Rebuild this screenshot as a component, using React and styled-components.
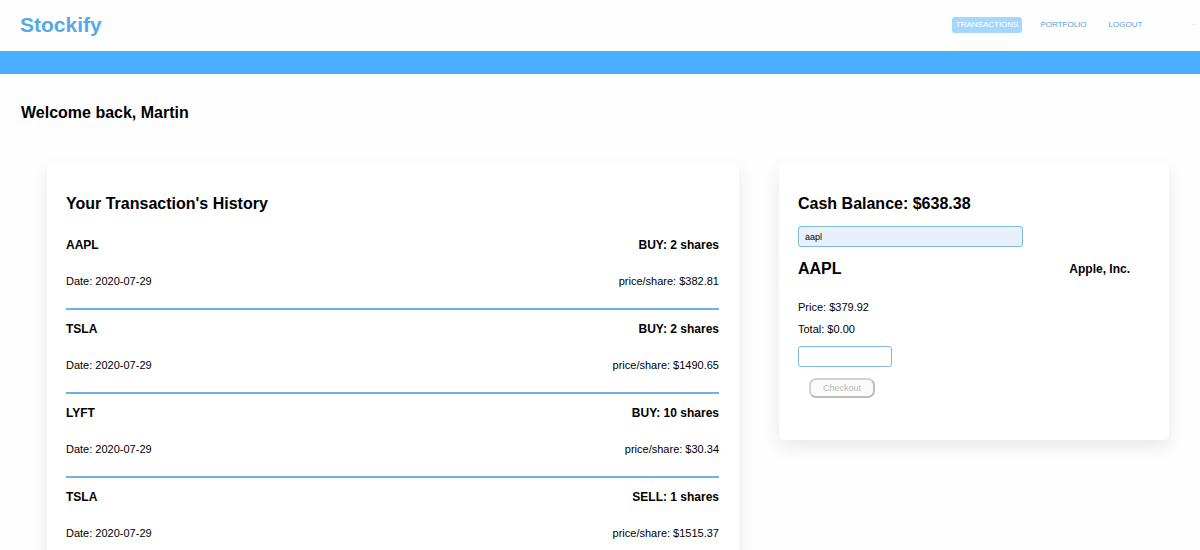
import React, { useState } from "react";
import styled, { createGlobalStyle } from "styled-components";

const GlobalStyle = createGlobalStyle`
  * { box-sizing: border-box; }
  body {
    margin: 0;
    background: #fefefe;
    color: #000;
    font-family: "Liberation Sans", Arial, sans-serif;
    font-size: 11px;
    line-height: 14px;
  }
  h1, h2, h3, p { margin: 0; }
`;

const Header = styled.header`
  display: flex;
  align-items: center;
  justify-content: space-between;
  height: 51px;
  padding: 0 5px 2px 20px;
`;

const Logo = styled.h1`
  color: #56a9e8;
  font-size: 21px;
  line-height: 24px;
`;

const Nav = styled.nav`
  display: flex;
  align-items: center;
  gap: 14px;
`;

const NavLink = styled.a`
  padding: 0 4px;
  border-radius: 3px;
  font-size: 8px;
  line-height: 16px;
  text-decoration: none;
  color: ${({ $active }) => ($active ? "#fff" : "#5a9fd4")};
  background: ${({ $active }) => ($active ? "#a5d7fd" : "transparent")};
`;

const NavDot = styled.span`
  margin-left: 32px;
  color: #8a9aa8;
  font-size: 8px;
  line-height: 16px;
`;

const Banner = styled.div`
  height: 23px;
  background: #4aafff;
`;

const Welcome = styled.h2`
  padding: 30px 21px 0;
  font-size: 16px;
  line-height: 18px;
`;

const Main = styled.main`
  display: grid;
  grid-template-columns: 692fr 390fr;
  align-items: start;
  gap: 40px;
  padding: 40px 31px 40px 47px;
`;

const Card = styled.section`
  padding: 32px 20px 42px 19px;
  border-radius: 5px;
  background: #fff;
  box-shadow: 0 7px 18px rgba(0, 0, 0, 0.09);
`;

const CardTitle = styled.h2`
  font-size: 16px;
  line-height: 20px;
`;

const List = styled.ul`
  margin: 24px 0 0;
  padding: 0;
  list-style: none;
`;

const Item = styled.li`
  display: grid;
  gap: 22px;
  height: 72px;
  align-content: start;
  margin-bottom: 12px;
  border-bottom: 2px solid #6fb1dd;
`;

const Line = styled.div`
  display: flex;
  align-items: center;
  justify-content: space-between;
`;

const Strong = styled.h3`
  font-size: 12px;
  line-height: 14px;
`;

const Order = styled.form`
  display: flex;
  flex-direction: column;
  align-items: flex-start;
`;

const Field = styled.input`
  width: ${({ $width }) => $width};
  height: 21px;
  padding: 0 6px;
  border: 1px solid #7fb9dc;
  border-radius: 3px;
  background: ${({ $filled }) => ($filled ? "#e8f0fe" : "#fff")};
  font-family: inherit;
  font-size: 9px;
  outline: none;
`;

const Search = styled(Field)`
  margin: 12px 0;
`;

const Quote = styled(Line)`
  align-self: stretch;
  padding-right: 19px;
`;

const Detail = styled.p`
  margin-top: ${({ $first }) => ($first ? "21px" : "8px")};
`;

const Amount = styled(Field)`
  margin: 10px 0 11px;
`;

const Checkout = styled.button`
  width: 66px;
  height: 20px;
  margin-left: 11px;
  padding: 0;
  border: 2px solid;
  border-color: #d2d2d2 #bcbcbc #bcbcbc #d2d2d2;
  border-radius: 7px;
  background: #fafafa;
  color: #b8b8b8;
  font-family: inherit;
  font-size: 9px;
`;

const links = ["TRANSACTIONS", "PORTFOLIO", "LOGOUT"];

const transactions = [
  { id: 1, ticker: "AAPL", action: "BUY", shares: 2, date: "2020-07-29", price: "382.81" },
  { id: 2, ticker: "TSLA", action: "BUY", shares: 2, date: "2020-07-29", price: "1490.65" },
  { id: 3, ticker: "LYFT", action: "BUY", shares: 10, date: "2020-07-29", price: "30.34" },
  { id: 4, ticker: "TSLA", action: "SELL", shares: 1, date: "2020-07-29", price: "1515.37" },
];

function Transaction({ ticker, action, shares, date, price }) {
  return (
    <Item>
      <Line>
        <Strong>{ticker}</Strong>
        <Strong>{`${action}: ${shares} shares`}</Strong>
      </Line>
      <Line>
        <p>{`Date: ${date}`}</p>
        <p>{`price/share: $${price}`}</p>
      </Line>
    </Item>
  );
}

export default function App() {
  const [symbol, setSymbol] = useState("aapl");
  const [quantity, setQuantity] = useState("");
  const total = (Number(quantity) || 0) * 379.92;

  return (
    <>
      <GlobalStyle />
      <Header>
        <Logo>Stockify</Logo>
        <Nav>
          {links.map((label, i) => (
            <NavLink key={label} href={`#${label.toLowerCase()}`} $active={i === 0}>
              {label}
            </NavLink>
          ))}
          <NavDot>·</NavDot>
        </Nav>
      </Header>
      <Banner />
      <Welcome>Welcome back, Martin</Welcome>
      <Main>
        <Card>
          <CardTitle>Your Transaction's History</CardTitle>
          <List>
            {transactions.map((t) => (
              <Transaction key={t.id} {...t} />
            ))}
          </List>
        </Card>
        <Card>
          <CardTitle>Cash Balance: $638.38</CardTitle>
          <Order onSubmit={(e) => e.preventDefault()}>
            <Search
              aria-label="Ticker symbol"
              $width="225px"
              $filled
              value={symbol}
              onChange={(e) => setSymbol(e.target.value)}
            />
            <Quote>
              <CardTitle>AAPL</CardTitle>
              <Strong>Apple, Inc.</Strong>
            </Quote>
            <Detail $first>Price: $379.92</Detail>
            <Detail>{`Total: $${total.toFixed(2)}`}</Detail>
            <Amount
              aria-label="Number of shares"
              $width="94px"
              value={quantity}
              onChange={(e) => setQuantity(e.target.value)}
            />
            <Checkout type="submit" disabled={!quantity}>
              Checkout
            </Checkout>
          </Order>
        </Card>
      </Main>
    </>
  );
}
